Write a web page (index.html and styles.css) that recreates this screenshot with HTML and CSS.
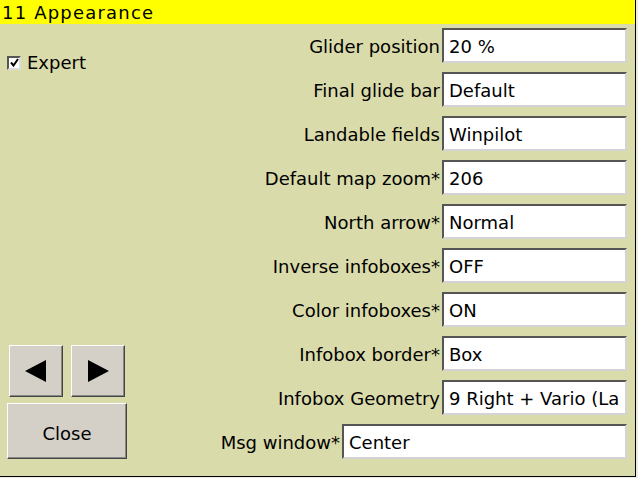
FILE: index.html
```html
<!DOCTYPE html>
<html>
<head>
<meta charset="utf-8">
<link rel="stylesheet" href="styles.css">
</head>
<body>
<div class="dialog">
  <div class="title">11 Appearance</div>
  <div class="content">
    <div class="side">
      <label class="check"><span class="box"><svg width="9" height="9" viewBox="0 0 9 9"><path d="M1 4.5 L3.5 7.5 L8 1" fill="none" stroke="#000" stroke-width="2"/></svg></span><span>Expert</span></label>
      <div class="buttons">
        <div class="arrows">
          <div class="btn arrow"><svg width="22" height="22" viewBox="0 0 22 22"><path d="M0 11 L21 0 L21 22 Z" fill="#000"/></svg></div>
          <div class="btn arrow"><svg width="22" height="22" viewBox="0 0 22 22"><path d="M22 11 L1 0 L1 22 Z" fill="#000"/></svg></div>
        </div>
        <div class="btn close">Close</div>
      </div>
    </div>
    <div class="form">
      <div class="row"><span class="label">Glider position</span><span class="field">20 %</span></div>
      <div class="row"><span class="label">Final glide bar</span><span class="field">Default</span></div>
      <div class="row"><span class="label">Landable fields</span><span class="field">Winpilot</span></div>
      <div class="row"><span class="label">Default map zoom*</span><span class="field">206</span></div>
      <div class="row"><span class="label">North arrow*</span><span class="field">Normal</span></div>
      <div class="row"><span class="label">Inverse infoboxes*</span><span class="field">OFF</span></div>
      <div class="row"><span class="label">Color infoboxes*</span><span class="field">ON</span></div>
      <div class="row"><span class="label">Infobox border*</span><span class="field">Box</span></div>
      <div class="row"><span class="label">Infobox Geometry</span><span class="field">9 Right + Vario (La</span></div>
      <div class="row"><span class="label">Msg window*</span><span class="field wide">Center</span></div>
    </div>
  </div>
</div>
</body>
</html>
```

FILE: styles.css
```css
html, body {
  margin: 0;
  padding: 0;
  background: #ecebe4;
}
body {
  width: 638px;
  height: 478px;
  overflow: hidden;
  font-family: "DejaVu Sans", sans-serif;
  font-size: 18px;
  color: #000;
}
.dialog {
  width: 635px;
  height: 476px;
  border-right: 1px solid #000;
  border-bottom: 1px solid #000;
  background: #dadbab;
  display: flex;
  flex-direction: column;
}
.title {
  height: 24px;
  background: #ffff00;
  line-height: 26px;
  padding-left: 2px;
  font-size: 18px;
  letter-spacing: 1.2px;
  flex: none;
}
.content {
  flex: 1;
  display: flex;
  justify-content: space-between;
  padding: 4px 8px 0 0;
}
.side {
  display: flex;
  flex-direction: column;
  justify-content: space-between;
  padding-bottom: 17px;
}
.check {
  display: flex;
  align-items: center;
  gap: 6px;
  margin: 24px 0 0 7px;
}
.box {
  width: 10px;
  height: 10px;
  background: #fff;
  border: 2px solid;
  border-color: #555 #ddd #ddd #555;
  display: flex;
  align-items: center;
  justify-content: center;
}
.buttons {
  display: flex;
  flex-direction: column;
  gap: 6px;
  padding-left: 7px;
}
.arrows {
  display: flex;
  gap: 8px;
  padding-left: 2px;
}
.btn {
  background: #d4d0c8;
  border: 1px solid;
  border-color: #fff #444 #444 #fff;
  box-shadow: inset -1px -1px 0 #888;
  display: flex;
  align-items: center;
  justify-content: center;
  box-sizing: border-box;
}
.arrow {
  width: 54px;
  height: 52px;
}
.close {
  width: 120px;
  height: 56px;
  padding-top: 4px;
}
.form {
  display: flex;
  flex-direction: column;
  gap: 9px;
}
.row {
  display: flex;
  justify-content: flex-end;
  align-items: center;
  gap: 2px;
}
.label {
  padding-top: 1px;
}
.field {
  width: 185px;
  height: 35px;
  box-sizing: border-box;
  background: #fff;
  border: 2px solid;
  border-color: #555 #d4d4d4 #d4d4d4 #555;
  padding: 1px 0 0 5px;
  display: flex;
  align-items: center;
  white-space: nowrap;
  overflow: hidden;
}
.field.wide {
  width: 285px;
}
```
